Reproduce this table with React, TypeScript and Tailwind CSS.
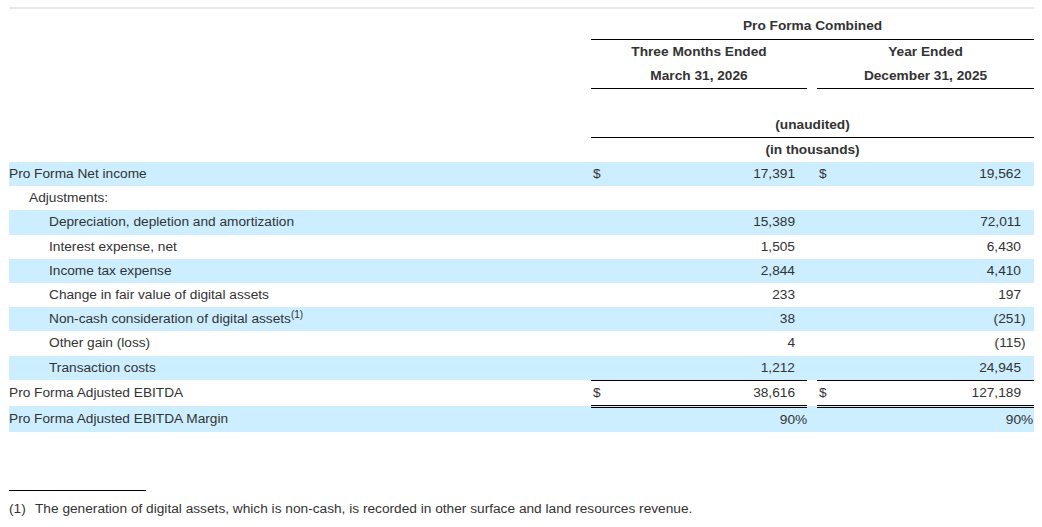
import React from "react";

type Row = {
  label: React.ReactNode;
  indent: number;
  blue: boolean;
  d1?: boolean;
  v1: string;
  s1?: string;
  d2?: boolean;
  v2: string;
  s2?: string;
  top?: boolean;
  dbl?: boolean;
};

const rows: Row[] = [
  { label: "Pro Forma Net income", indent: 0, blue: true, d1: true, v1: "17,391", d2: true, v2: "19,562" },
  { label: "Adjustments:", indent: 1, blue: false, v1: "", v2: "" },
  { label: "Depreciation, depletion and amortization", indent: 2, blue: true, v1: "15,389", v2: "72,011" },
  { label: "Interest expense, net", indent: 2, blue: false, v1: "1,505", v2: "6,430" },
  { label: "Income tax expense", indent: 2, blue: true, v1: "2,844", v2: "4,410" },
  { label: "Change in fair value of digital assets", indent: 2, blue: false, v1: "233", v2: "197" },
  {
    label: (
      <>
        Non-cash consideration of digital assets
        <sup className="text-[10px] relative -top-[5px] align-baseline">(1)</sup>
      </>
    ),
    indent: 2,
    blue: true,
    v1: "38",
    v2: "(251",
    s2: ")",
  },
  { label: "Other gain (loss)", indent: 2, blue: false, v1: "4", v2: "(115", s2: ")" },
  { label: "Transaction costs", indent: 2, blue: true, v1: "1,212", v2: "24,945" },
  { label: "Pro Forma Adjusted EBITDA", indent: 0, blue: false, d1: true, v1: "38,616", d2: true, v2: "127,189", top: true, dbl: true },
  { label: "Pro Forma Adjusted EBITDA Margin", indent: 0, blue: true, v1: "90", s1: "%", v2: "90", s2: "%" },
];

export default function App() {
  const font = { fontFamily: '"Liberation Sans", Arial, sans-serif' };
  return (
    <div className="bg-white min-h-[527px] pt-[7px] px-[9px] text-[#333333] text-[13.7px]" style={font}>
      <div className="w-[1025px] border-t-2 border-[#e8e8e8]" />
      <table className="w-[1025px] border-collapse table-fixed mt-[5px]">
        <colgroup>
          <col className="w-[582px]" />
          <col className="w-[14px]" />
          <col className="w-[190px]" />
          <col className="w-[12px]" />
          <col className="w-[10px]" />
          <col className="w-[14px]" />
          <col className="w-[190px]" />
          <col className="w-[13px]" />
        </colgroup>
        <tbody>
          <tr className="h-[25px]">
            <td></td>
            <td colSpan={7} className="text-center font-bold border-b border-[#000] p-0 leading-[24px]">
              Pro Forma Combined
            </td>
          </tr>
          <tr className="h-[24px]">
            <td></td>
            <td colSpan={3} className="text-center font-bold p-0 leading-[24px]">Three Months Ended</td>
            <td></td>
            <td colSpan={3} className="text-center font-bold p-0 leading-[24px]">Year Ended</td>
          </tr>
          <tr className="h-[25px]">
            <td></td>
            <td colSpan={3} className="text-center font-bold p-0 leading-[24px] border-b border-[#000]">March 31, 2026</td>
            <td></td>
            <td colSpan={3} className="text-center font-bold p-0 leading-[24px] border-b border-[#000]">December 31, 2025</td>
          </tr>
          <tr className="h-[24px]">
            <td colSpan={8}></td>
          </tr>
          <tr className="h-[25px]">
            <td></td>
            <td colSpan={7} className="text-center font-bold p-0 leading-[24px] border-b border-[#000]">(unaudited)</td>
          </tr>
          <tr className="h-[24px]">
            <td></td>
            <td colSpan={7} className="text-center font-bold p-0 leading-[24px]">(in thousands)</td>
          </tr>
          {rows.map((r, i) => {
            const bg = r.blue ? "bg-[#cceeff]" : "";
            const bt = r.top ? "border-t border-[#000]" : "";
            const bb = r.dbl ? "border-b-[3px] border-double border-b-[#000]" : "";
            const cell = `p-0 leading-[24px] h-[24.2px] ${bt} ${bb}`;
            return (
              <tr key={i} className={bg}>
                <td
                  className={`p-0 leading-[24px] h-[24.2px] whitespace-nowrap ${
                    r.indent === 0 ? "pl-0" : r.indent === 1 ? "pl-[20px]" : "pl-[40px]"
                  }`}
                >
                  {r.label}
                </td>
                <td className={`${cell} pl-[2px]`}>{r.d1 ? "$" : ""}</td>
                <td className={`${cell} text-right`}>{r.v1}</td>
                <td className={`${cell} text-left`}>{r.s1 ?? ""}</td>
                <td className="p-0"></td>
                <td className={`${cell} pl-[2px]`}>{r.d2 ? "$" : ""}</td>
                <td className={`${cell} text-right`}>{r.v2}</td>
                <td className={`${cell} text-left`}>{r.s2 ?? ""}</td>
              </tr>
            );
          })}
        </tbody>
      </table>
      <div className="mt-[58px] w-[137px] border-t border-[#000]" />
      <div className="mt-[8px] flex leading-[20px]">
        <span className="w-[26px]">(1)</span>
        <span>The generation of digital assets, which is non-cash, is recorded in other surface and land resources revenue.</span>
      </div>
    </div>
  );
}
